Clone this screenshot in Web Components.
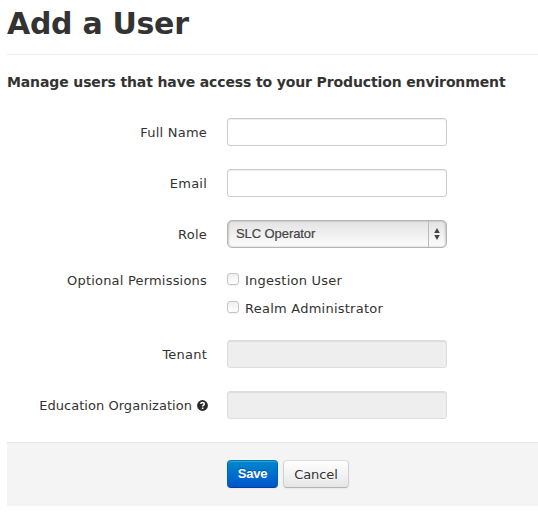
<!DOCTYPE html>
<html lang="en">
<head>
<meta charset="utf-8">
<title>Add a User</title>
<style>
body{margin:0;background:#fff;color:#333;font:13px/18px "DejaVu Sans",sans-serif}
</style>
</head>
<body>
<user-form-page></user-form-page>
<script>
const define = (name, html, init) => customElements.define(name, class extends HTMLElement {
  constructor() {
    super();
    this.attachShadow({ mode: 'open' }).innerHTML = html;
  }
  connectedCallback() { if (init) init(this, this.shadowRoot); }
});

define('page-title', `<style>
:host{display:block;box-sizing:border-box;height:55px;padding-top:6px;border-bottom:1px solid #eee}
h1{margin:0;font-size:30px;line-height:36px;font-weight:bold;white-space:nowrap;letter-spacing:-.3px}
</style><h1><slot></slot></h1>`);

define('section-title', `<style>
:host{display:block;padding-top:18px}
h2{margin:0;font-size:14px;line-height:18px;font-weight:bold;white-space:nowrap;letter-spacing:-.127px}
</style><h2><slot></slot></h2>`);

define('form-row', `<style>
:host{display:grid;grid-template-columns:200px 220px;column-gap:20px;margin-bottom:23px}
.label{padding-top:var(--label-top,6px);display:flex;justify-content:flex-end;align-items:center;gap:5px;height:18px;white-space:nowrap;letter-spacing:var(--label-spacing,.22px)}
</style><div class="label"><slot name="label"></slot></div><div><slot></slot></div>`);

define('text-field', `<style>
:host{display:block}
input{display:block;box-sizing:border-box;width:220px;height:28px;margin:0;padding:4px 6px;border:1px solid #ccc;border-radius:3px;background:#fff;box-shadow:inset 0 1px 1px rgba(0,0,0,.075);outline:0}
input:disabled{background:#eee;border-color:#ddd}
</style><input type="text">`, (el, root) => {
  root.querySelector('input').disabled = el.hasAttribute('disabled');
});

define('select-field', `<style>
:host{display:flex;box-sizing:border-box;width:220px;height:28px;border:1px solid #b4b4b4;border-radius:5px;background:linear-gradient(#e3e3e3,#fdfdfd);box-shadow:inset 1px 0 2px rgba(0,0,0,.16),inset -1px 0 2px rgba(0,0,0,.16);font:13px/26px "Liberation Sans",sans-serif;color:#444;letter-spacing:-.08px;-webkit-text-stroke:.2px #444}
.value{flex:1;padding-left:8px}
.arrows{box-sizing:border-box;width:18px;padding-right:2px;border-left:1px solid #bbb;display:grid;place-items:center}
svg{display:block}
</style><span class="value"><slot></slot></span><span class="arrows"><svg width="6" height="12" viewBox="0 0 6 12"><path d="M3 0L5.8 5H.2zM3 12L5.8 7H.2z" fill="#444"/></svg></span>`);

define('check-option', `<style>
:host{display:flex;height:18px;align-items:center;gap:6px;margin:1px 0 10px;white-space:nowrap;letter-spacing:.24px}
i{box-sizing:border-box;width:12px;height:12px;margin-top:-4px;border:1px solid #c6c6c6;border-radius:3px;background:linear-gradient(#eee,#fff);box-shadow:0 1px 1px rgba(0,0,0,.05)}
</style><i></i><slot></slot>`);

define('help-icon', `<style>
:host{display:block;width:10px;height:11px;margin-top:-2px}svg{display:block}
</style><svg width="11" height="11" viewBox="0 0 11 11"><circle cx="5.5" cy="5.5" r="5.4" fill="#2b2b2b"/><path d="M3.8 4.1C3.8 2 7.3 2 7.3 4 7.3 5.3 5.6 5.1 5.6 6.6" fill="none" stroke="#fff" stroke-width="1.5"/><path d="M4.8 7.5h1.6V9H4.8z" fill="#fff"/></svg>`);

define('action-button', `<style>
:host{display:block}
button{display:block;box-sizing:border-box;width:66px;height:28px;margin:0;padding:1px 0 0;border:1px solid #ccc;border-color:#dcdcdc #d0d0d0 #b3b3b3;border-radius:4px;background:linear-gradient(#fff,#e6e6e6);box-shadow:inset 0 1px 0 rgba(255,255,255,.2),0 1px 2px rgba(0,0,0,.05);font:inherit;letter-spacing:-.08px;color:#333;text-shadow:0 1px 1px rgba(255,255,255,.75)}
:host([primary]) button{width:51px;padding:0;border-color:#0077b3 #0063b5 #003f9e;background:linear-gradient(#0088cc,#0055cc);color:#fff;font:bold 13px/18px "Liberation Sans",sans-serif;letter-spacing:-.2px;text-shadow:0 -1px 0 rgba(0,0,0,.25)}
</style><button type="button"><slot></slot></button>`);

define('form-actions', `<style>
:host{display:flex;box-sizing:border-box;gap:5px;height:64px;padding:17px 0 0 220px;border-top:1px solid #e5e5e5;background:#f4f4f4}
</style><slot></slot>`);

define('user-form-page', `<style>
:host{display:block;padding-left:7px}
.fields{padding-top:27px}
.perms{--label-top:1px;--label-spacing:.2px;margin-bottom:12px}
.last{--label-spacing:.04px}
</style>
<page-title>Add a User</page-title>
<section-title>Manage users that have access to your Production environment</section-title>
<div class="fields">
<form-row><span slot="label">Full Name</span><text-field></text-field></form-row>
<form-row><span slot="label">Email</span><text-field></text-field></form-row>
<form-row><span slot="label">Role</span><select-field>SLC Operator</select-field></form-row>
<form-row class="perms"><span slot="label">Optional Permissions</span><check-option>Ingestion User</check-option><check-option>Realm Administrator</check-option></form-row>
<form-row><span slot="label">Tenant</span><text-field disabled></text-field></form-row>
<form-row class="last"><span slot="label">Education Organization</span><help-icon slot="label"></help-icon><text-field disabled></text-field></form-row>
</div>
<form-actions><action-button primary>Save</action-button><action-button>Cancel</action-button></form-actions>`);
</script>
</body>
</html>
